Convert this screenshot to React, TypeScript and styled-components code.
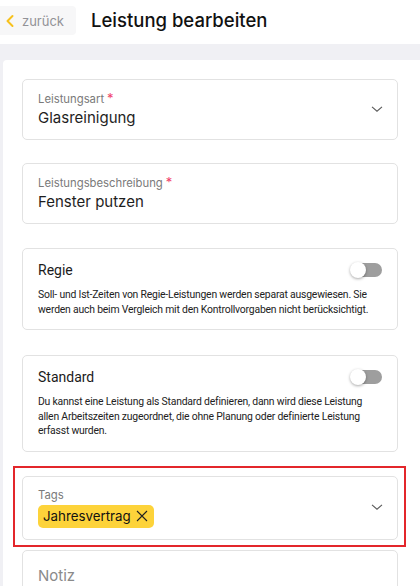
import React from "react";
import styled, { createGlobalStyle } from "styled-components";

const Global = createGlobalStyle`
  html, body { margin: 0; padding: 0; }
  body {
    background: #f0f0f4;
    font-family: Inter, "Noto Sans", sans-serif;
    color: #1f1f1f;
    overflow: hidden;
  }
  * { box-sizing: border-box; }
`;

const Page = styled.div`
  width: 420px;
  height: 586px;
  overflow: hidden;
  display: flex;
  flex-direction: column;
`;

const Header = styled.header`
  height: 44px;
  background: #fff;
  display: flex;
  align-items: flex-start;
  padding-top: 6px;
  gap: 15px;
  flex-shrink: 0;
`;

const BackButton = styled.button`
  height: 29px;
  width: 76px;
  border: none;
  border-radius: 0 4px 4px 0;
  background: #f7f7f8;
  display: flex;
  align-items: center;
  gap: 7px;
  padding: 0 0 0 5px;
  font-family: Inter, sans-serif;
  font-size: 13px;
  color: #929297;
  cursor: pointer;
`;

const Title = styled.h1`
  margin: 0;
  font-size: 18.5px;
  font-weight: 500;
  line-height: 29px;
  color: #111;
`;

const Main = styled.main`
  flex: 1;
  padding: 16px 0 0 3px;
  display: flex;
`;

const Card = styled.section`
  flex: 1;
  background: #fff;
  border-radius: 4px 0 0 0;
  padding: 19px 22px 0 19px;
  display: flex;
  flex-direction: column;
`;

const Box = styled.div<{ $mt?: number }>`
  position: relative;
  border: 1px solid #e2e2e2;
  border-radius: 5px;
  margin-top: ${(p) => p.$mt ?? 0}px;
  background: #fff;
  flex-shrink: 0;
`;

const SelectBox = styled(Box)`
  padding: 10px 14px 11px 15px;
  display: flex;
  align-items: center;
`;

const FieldBody = styled.div`
  flex: 1;
  display: flex;
  flex-direction: column;
`;

const Label = styled.div`
  font-size: 11.3px;
  line-height: 16px;
  color: #7a7a7a;
`;

const Required = styled.span`
  color: #f0426a;
  margin-left: 3px;
  font-size: 13px;
`;

const Value = styled.div`
  margin-top: 1px;
  font-size: 15px;
  line-height: 20px;
  color: #1e1e1e;
`;

const Chevron = styled.svg`
  width: 12px;
  height: 12px;
  flex-shrink: 0;
`;

const SwitchBox = styled(Box)`
  padding: 11px 15px 12px 15px;
  font-family: Roboto, Inter, sans-serif;
`;

const SwitchHead = styled.div`
  display: flex;
  align-items: center;
  justify-content: space-between;
  height: 20px;
`;

const SwitchTitle = styled.div`
  font-size: 14px;
  color: #1b1b1b;
`;

const Track = styled.span`
  position: relative;
  width: 29px;
  height: 14px;
  border-radius: 7px;
  background: #9e9e9e;
`;

const Thumb = styled.span`
  position: absolute;
  left: -3px;
  top: -1px;
  width: 16px;
  height: 16px;
  border-radius: 50%;
  background: #fff;
  box-shadow: 0 1px 3px rgba(0, 0, 0, 0.35);
`;

const Description = styled.p`
  margin: 8px 0 0 0;
  font-size: 10.4px;
  line-height: 14.6px;
  letter-spacing: -0.2px;
  color: #222;
`;

const Highlight = styled.div`
  position: absolute;
  left: -10px;
  right: -9px;
  top: -11px;
  bottom: -8px;
  border: 2.5px solid #e3262b;
  pointer-events: none;
`;

const Chip = styled.span`
  margin-top: 2px;
  align-self: flex-start;
  height: 23px;
  display: inline-flex;
  align-items: center;
  gap: 5px;
  padding: 0 6px 0 5px;
  border-radius: 5px;
  background: #fdd33a;
  font-size: 13.3px;
  color: #111;
`;

const NoteBox = styled(Box)`
  padding: 15px 15px 30px 15px;
  font-size: 15px;
  line-height: 20px;
  color: #8a8a8a;
`;

const ChevronDown = () => (
  <Chevron viewBox="0 0 12 12" fill="none">
    <path d="M1 3.8 L6 8.2 L11 3.8" stroke="#5a5a5a" strokeWidth="1.1" />
  </Chevron>
);

const Toggle = () => (
  <Track>
    <Thumb />
  </Track>
);

export default function App() {
  return (
    <Page>
      <Global />
      <Header>
        <BackButton>
          <svg width="10" height="14" viewBox="0 0 10 14" fill="none">
            <path d="M7.5 2 L2.5 7 L7.5 12" stroke="#f7c11c" strokeWidth="2" strokeLinecap="round" strokeLinejoin="round" />
          </svg>
          zurück
        </BackButton>
        <Title>Leistung bearbeiten</Title>
      </Header>
      <Main>
        <Card>
          <SelectBox>
            <FieldBody>
              <Label>
                Leistungsart<Required>*</Required>
              </Label>
              <Value>Glasreinigung</Value>
            </FieldBody>
            <ChevronDown />
          </SelectBox>

          <SelectBox $mt={23}>
            <FieldBody>
              <Label>
                Leistungsbeschreibung<Required>*</Required>
              </Label>
              <Value>Fenster putzen</Value>
            </FieldBody>
          </SelectBox>

          <SwitchBox $mt={24}>
            <SwitchHead>
              <SwitchTitle>Regie</SwitchTitle>
              <Toggle />
            </SwitchHead>
            <Description>
              Soll- und Ist-Zeiten von Regie-Leistungen werden separat ausgewiesen. Sie werden auch beim
              Vergleich mit den Kontrollvorgaben nicht berücksichtigt.
            </Description>
          </SwitchBox>

          <SwitchBox $mt={25}>
            <SwitchHead>
              <SwitchTitle>Standard</SwitchTitle>
              <Toggle />
            </SwitchHead>
            <Description>
              Du kannst eine Leistung als Standard definieren, dann wird diese Leistung allen
              Arbeitszeiten zugeordnet, die ohne Planung oder definierte Leistung erfasst wurden.
            </Description>
          </SwitchBox>

          <SelectBox $mt={24}>
            <FieldBody>
              <Label>Tags</Label>
              <Chip>
                Jahresvertrag
                <svg width="12" height="12" viewBox="0 0 12 12" fill="none">
                  <path d="M1 1 L11 11 M11 1 L1 11" stroke="#222" strokeWidth="1.1" />
                </svg>
              </Chip>
            </FieldBody>
            <ChevronDown />
            <Highlight />
          </SelectBox>

          <NoteBox $mt={10}>Notiz</NoteBox>
        </Card>
      </Main>
    </Page>
  );
}
